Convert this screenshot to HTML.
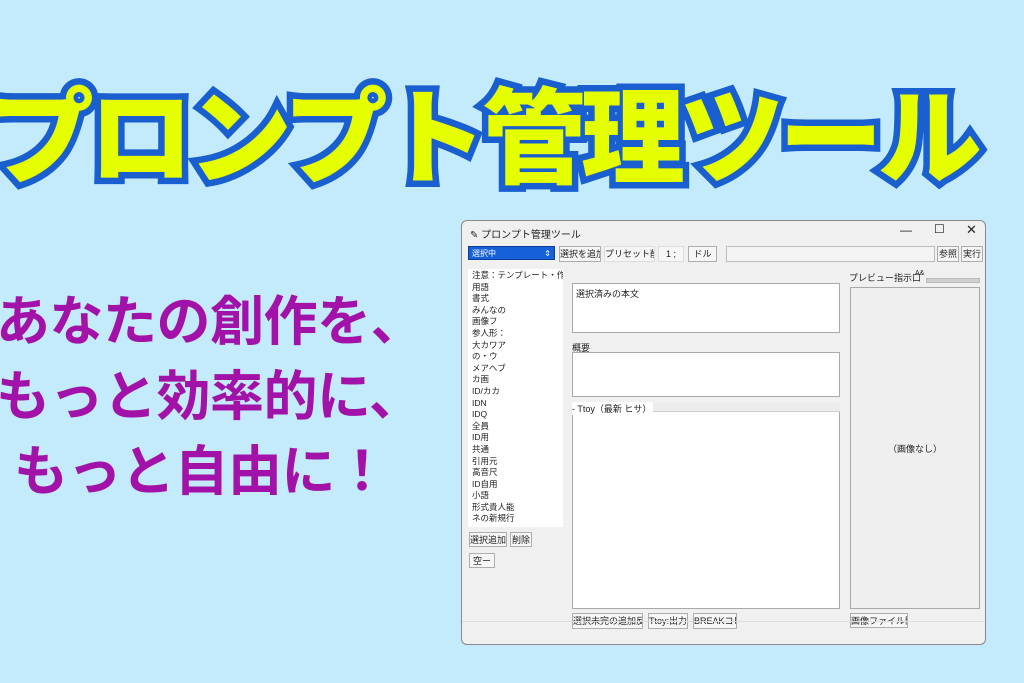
<!DOCTYPE html>
<html><head><meta charset="utf-8"><style>
*{margin:0;padding:0;box-sizing:border-box}
body{width:1024px;height:683px;overflow:hidden;background:#c3ebfb;position:relative;font-family:"Liberation Sans","Noto Sans CJK JP",sans-serif}
.title{position:absolute;left:-10px;top:55px;font-family:"Noto Sans CJK JP",sans-serif;font-weight:900;font-size:104px;line-height:150px;letter-spacing:-5px;color:#e6ff00;-webkit-text-stroke:13px #1a5fd0;paint-order:stroke fill;white-space:nowrap}
.sub{position:absolute;font-family:"Noto Sans CJK JP",sans-serif;font-weight:700;font-size:54px;color:#a211a8;white-space:nowrap;line-height:60px;letter-spacing:-0.5px}
.win{position:absolute;left:461px;top:220px;width:525px;height:425px;background:#f0f0f0;border:1px solid #8a8a8a;border-radius:6px;font-size:10px;color:#222}
.a{position:absolute}
.btn{position:absolute;background:#f6f6f6;border:1px solid #adadad;font-size:9px;line-height:14px;text-align:center;white-space:nowrap;overflow:hidden}
.box{position:absolute;background:#fff;border:1px solid #a9a9a9}
.list div{font-size:8.5px;line-height:11.6px;padding-left:4px;white-space:nowrap;overflow:hidden}
</style></head><body>
<div class="title">プロンプト管理ツール</div>
<div class="sub" style="left:-4px;top:287px">あなたの創作を、</div>
<div class="sub" style="left:-4px;top:362px">もっと効率的に、</div>
<div class="sub" style="left:14px;top:437px">もっと自由に！</div>

<div class="win">
 <div class="a" style="left:8px;top:5px;font-size:10px">✎ プロンプト管理ツール</div>
 <div class="a" style="left:438px;top:2px;font-size:12px">—</div>
 <div class="a" style="left:472px;top:1px;font-size:12px">☐</div>
 <div class="a" style="left:504px;top:1px;font-size:13px">✕</div>
 <div class="a" style="left:6px;top:25px;width:87px;height:14px;background:#1660d8;color:#fff;font-size:8px;line-height:14px;padding-left:3px;border:1px solid #0c3f9c">選択中 <span style="float:right;padding-right:3px">⇕</span></div>
 <div class="btn" style="left:97px;top:25px;width:42px;height:16px">選択を追加</div>
 <div class="btn" style="left:142px;top:25px;width:51px;height:16px;border-color:#ddd">プリセット削除</div>
 <div class="btn" style="left:196px;top:25px;width:26px;height:16px;border-color:#ddd">1 ;</div>
 <div class="btn" style="left:226px;top:25px;width:29px;height:16px">ドル</div>
 <div class="box" style="left:264px;top:25px;width:209px;height:16px;border-color:#bbb;background:#f4f4f4"></div>
 <div class="btn" style="left:475px;top:25px;width:22px;height:16px">参照</div>
 <div class="btn" style="left:499px;top:25px;width:22px;height:16px">実行</div>
 <div class="box list" style="left:6px;top:48px;width:95px;height:258px;border:none;padding-top:1px">
  <div>注意：テンプレート・作成前の弊</div><div>用語</div><div>書式</div><div>みんなの</div><div>画像フ</div><div>参人形：</div><div>大カワア</div><div>の・ウ</div><div>メアヘブ</div><div>カ画</div><div>ID/カカ</div><div>IDN</div><div>IDQ</div><div>全員</div><div>ID用</div><div>共通</div><div>引用元</div><div>高音尺</div><div>ID自用</div><div>小語</div><div>形式貴人能</div><div>ネの新規行</div>
 </div>
 <div class="btn" style="left:7px;top:311px;width:38px;height:15px">選択追加</div>
 <div class="btn" style="left:48px;top:311px;width:22px;height:15px">削除</div>
 <div class="btn" style="left:7px;top:332px;width:26px;height:15px">空ー</div>
 <div class="a" style="left:110px;top:62px;width:268px;height:50px;background:#fff;border:1px solid #a9a9a9;padding:3px;font-size:9px">選択済みの本文</div>
 <div class="a" style="left:110px;top:120px;font-size:9px">概要</div>
 <div class="box" style="left:110px;top:131px;width:268px;height:45px"></div>
 <div class="box" style="left:110px;top:182px;width:268px;height:206px"></div>
 <div class="a" style="left:110px;top:182px;width:268px;height:9px;background:#ececec;border-bottom:1px solid #ccc"></div>
 <div class="a" style="left:110px;top:181px;font-size:9px;background:#fff;padding-right:2px">- Ttoy（最新 ヒサ）</div>
 <div class="btn" style="left:110px;top:392px;width:71px;height:16px">選択未完の追加反応</div>
 <div class="btn" style="left:186px;top:392px;width:40px;height:16px">Ttoy:出力:..</div>
 <div class="btn" style="left:231px;top:392px;width:44px;height:16px">BREAKコピー</div>
 <div class="a" style="left:387px;top:50px;font-size:9px">プレビュー指示口</div>
 <div class="a" style="left:453px;top:49px;font-size:7px">A&amp;</div>
 <div class="a" style="left:464px;top:57px;width:54px;height:5px;background:#cfcfcf;border:1px solid #bbb"></div>
 <div class="a" style="left:388px;top:66px;width:130px;height:322px;border:1px solid #a9a9a9;background:#efefef;text-align:center;line-height:322px;font-size:9px">（画像なし）</div>
 <div class="btn" style="left:388px;top:392px;width:58px;height:15px">画像ファイル開く</div>
 <div class="a" style="left:0;top:400px;width:523px;height:1px;background:#ddd"></div>
</div>
</body></html>
